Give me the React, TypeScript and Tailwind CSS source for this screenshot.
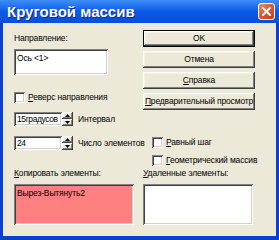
import React, { ReactNode } from "react";

const font = { fontFamily: '"Liberation Sans", Arial, sans-serif' };

const sunken =
  "bg-white shadow-[inset_1px_1px_0_#808080,inset_-1px_-1px_0_#ffffff,inset_2px_2px_0_#404040,inset_-2px_-2px_0_#d4d0c8]";

const raised =
  "bg-[#ece9d8] shadow-[inset_-1px_-1px_0_#404040,inset_1px_1px_0_#ffffff,inset_-2px_-2px_0_#808080,inset_2px_2px_0_#f4f2e8]";

function Button({ children, isDefault }: { children: ReactNode; isDefault?: boolean }) {
  if (isDefault) {
    return (
      <div className="h-[17px] w-full border border-black">
        <div className={`${raised} h-full w-full flex items-center justify-center text-black`}>
          {children}
        </div>
      </div>
    );
  }
  return (
    <div className={`${raised} h-[17px] w-full flex items-center justify-center text-black whitespace-nowrap`}>
      {children}
    </div>
  );
}

function Checkbox({ children }: { children: ReactNode }) {
  return (
    <div className="flex items-center gap-[3px] h-[12px]">
      <div className={`${sunken} size-[11px] shrink-0`} />
      <span className="leading-[12px] text-black whitespace-nowrap">{children}</span>
    </div>
  );
}

function Arrow({ up }: { up?: boolean }) {
  return (
    <svg width="5" height="3" viewBox="0 0 5 3">
      <path d={up ? "M0 3 L2.5 0 L5 3 Z" : "M0 0 L2.5 3 L5 0 Z"} fill="#000" />
    </svg>
  );
}

function Spin({ value, label }: { value: string; label: string }) {
  return (
    <div className="flex items-center h-[14px]">
      <div className={`${sunken} w-[48px] h-full flex items-center pl-[3px] leading-[12px] tracking-[-0.4px] whitespace-nowrap overflow-hidden`}>
        {value}
      </div>
      <div className="w-[11px] h-full flex flex-col">
        <div className={`${raised} h-[7px] flex items-center justify-center`}>
          <Arrow up />
        </div>
        <div className={`${raised} h-[7px] flex items-center justify-center`}>
          <Arrow />
        </div>
      </div>
      <span className="ml-[5px] leading-[12px] text-black whitespace-nowrap">{label}</span>
    </div>
  );
}

export default function App() {
  return (
    <div
      style={font}
      className="w-[279px] h-[240px] flex flex-col bg-[#0a3fd4] text-[8.5px] tracking-[-0.15px] text-black overflow-hidden"
    >
      {/* title bar */}
      <div className="h-[23px] shrink-0 flex items-center justify-between pl-[7px] pr-[4px] bg-gradient-to-b from-[#3f8ef8] via-[#0a5ae8] to-[#0550d6] tracking-normal">
        <span className="text-white font-bold text-[15px] leading-none [text-shadow:1px_1px_#0b2a8c]">
          Круговой массив
        </span>
        <div className="size-[17px] rounded-[3px] border border-white bg-gradient-to-br from-[#f08b62] via-[#e0552e] to-[#c2401c] flex items-center justify-center">
          <svg width="9" height="9" viewBox="0 0 9 9">
            <path d="M1 1 L8 8 M8 1 L1 8" stroke="#fff" strokeWidth="2" strokeLinecap="square" />
          </svg>
        </div>
      </div>

      {/* client area */}
      <div className="flex-1 mx-[3px] mb-[4px] bg-[#ece9d8] pl-[11px] pt-[7px] flex flex-col">
        {/* top section */}
        <div className="flex">
          <div className="w-[94px] flex flex-col">
            <span className="mt-[2px] leading-[12px]">Направление:</span>
            <div className={`${sunken} mt-[5px] h-[26px] px-[3px] pt-[3px] leading-[12px]`}>
              Ось &lt;1&gt;
            </div>
            <div className="mt-[16px]">
              <Checkbox>
                <u>Р</u>еверс направления
              </Checkbox>
            </div>
          </div>
          <div className="ml-[35px] w-[112px] flex flex-col gap-[4px]">
            <Button isDefault>OK</Button>
            <Button>Отмена</Button>
            <Button>
              <span>
                <u>С</u>правка
              </span>
            </Button>
            <Button>
              <span>
                <u>П</u>редварительный просмотр
              </span>
            </Button>
          </div>
        </div>

        {/* spins & options */}
        <div className="mt-[2px] flex">
          <div className="w-[134px] flex flex-col gap-[10px]">
            <Spin value="15градусов" label="Интервал" />
            <Spin value="24" label="Число элементов" />
          </div>
          <div className="ml-[4px] pt-[24px] flex flex-col gap-[6px]">
            <Checkbox>
              <u>Р</u>авный шаг
            </Checkbox>
            <Checkbox>
              <u>Г</u>еометрический массив
            </Checkbox>
          </div>
        </div>

        {/* bottom lists */}
        <div className="mt-[1px] flex gap-[9px]">
          <div className="w-[120px] flex flex-col">
            <span className="leading-[12px]">
              <u>К</u>опировать элементы:
            </span>
            <div className="mt-[5px] h-[41px] px-[3px] pt-[3px] leading-[12px] bg-[#ff8080] shadow-[inset_1px_1px_0_#808080,inset_-1px_-1px_0_#ffffff,inset_2px_2px_0_#404040,inset_-2px_-2px_0_#d4d0c8]">
              Вырез-Вытянуть2
            </div>
          </div>
          <div className="w-[110px] flex flex-col">
            <span className="leading-[12px] whitespace-nowrap">
              <u>У</u>даленные элементы:
            </span>
            <div className={`${sunken} mt-[5px] h-[41px]`} />
          </div>
        </div>
      </div>
    </div>
  );
}
